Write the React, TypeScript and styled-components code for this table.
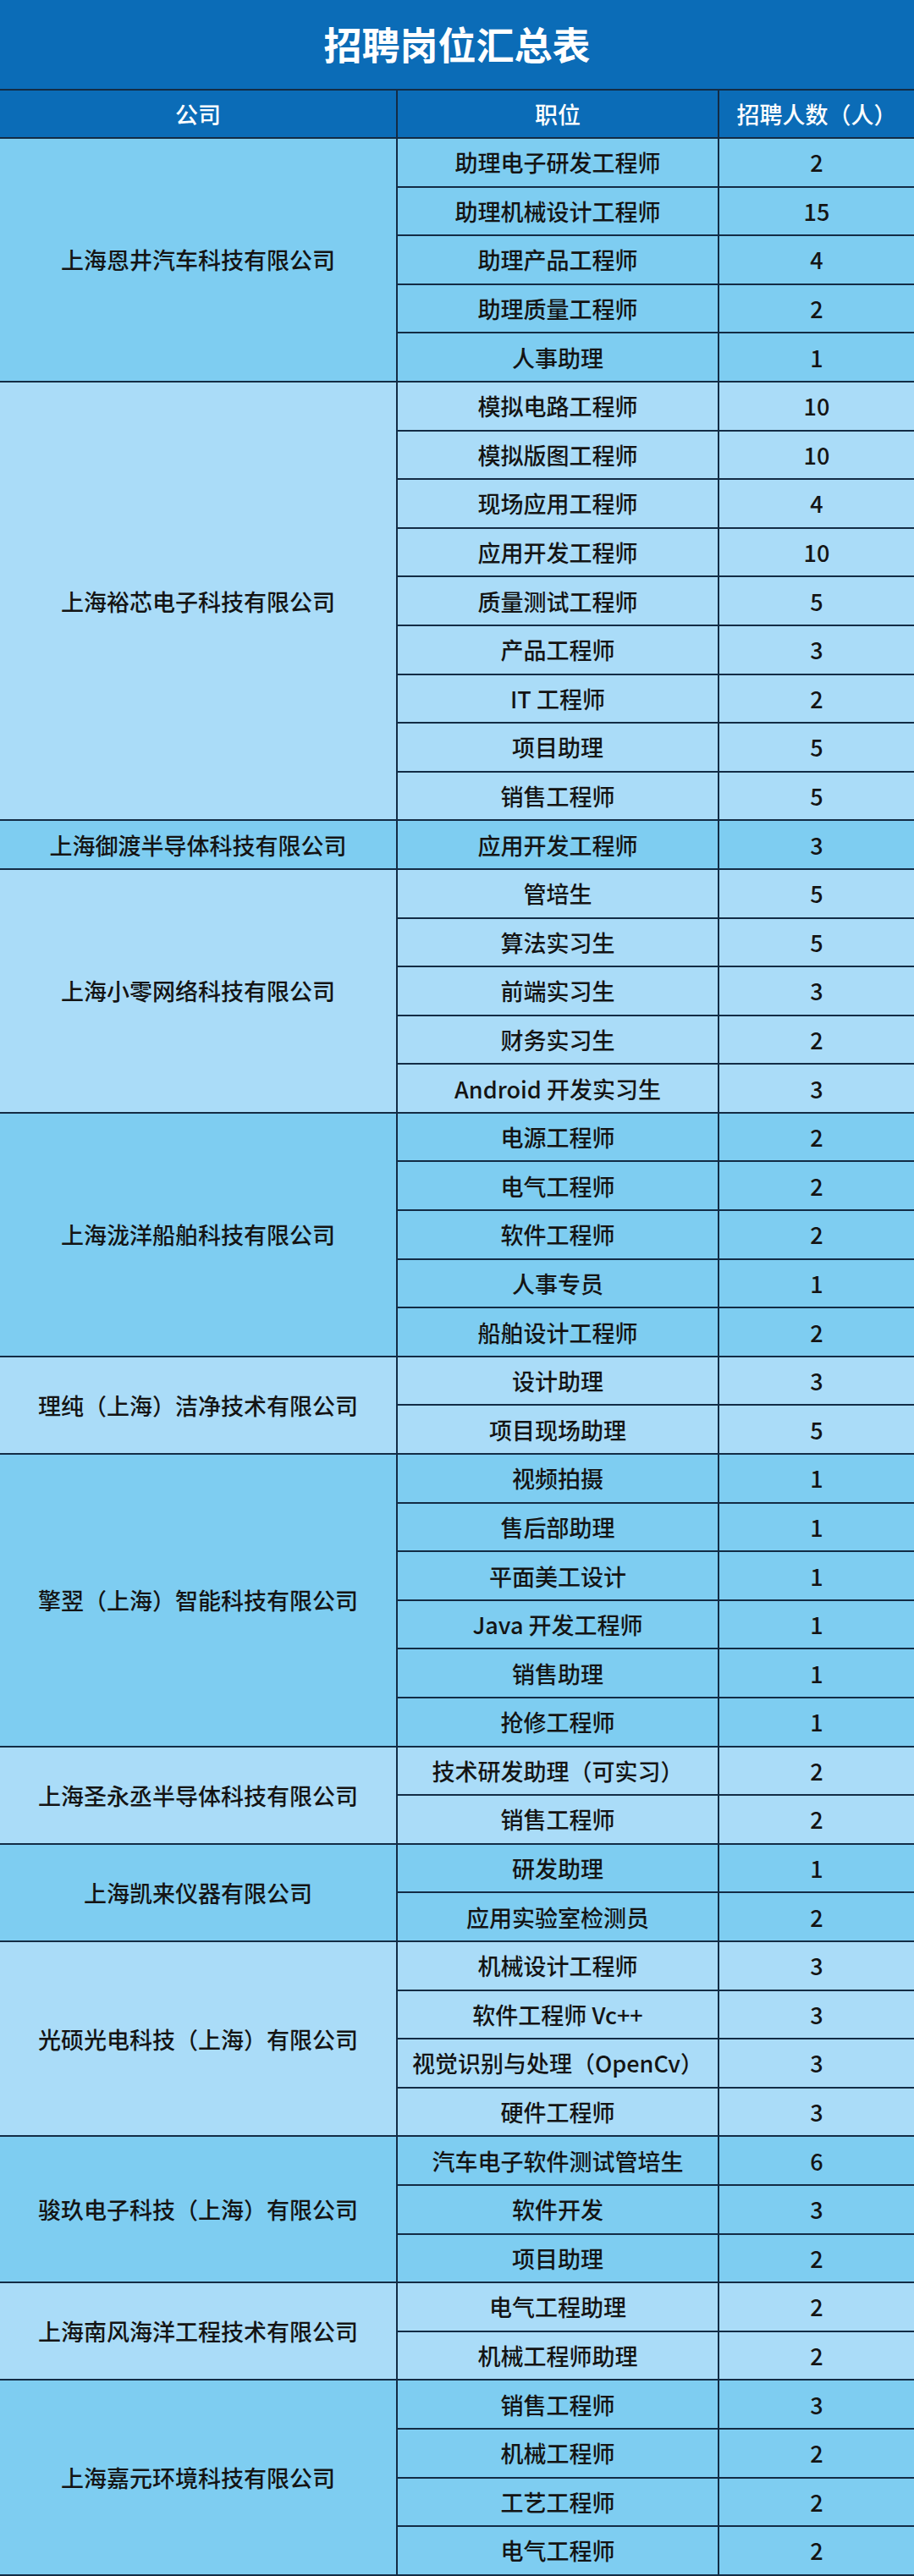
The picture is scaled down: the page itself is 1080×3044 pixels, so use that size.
import React from "react";
import styled, { createGlobalStyle } from "styled-components";

const Global = createGlobalStyle`
  html, body { margin: 0; padding: 0; background: #7ecdf1; }
  body { font-family: "Noto Sans CJK SC", "Noto Sans", sans-serif; }
`;

type Job = [string, number];
type Company = { name: string; jobs: Job[] };

const data: Company[] = [
  { name: "上海恩井汽车科技有限公司", jobs: [["助理电子研发工程师", 2], ["助理机械设计工程师", 15], ["助理产品工程师", 4], ["助理质量工程师", 2], ["人事助理", 1]] },
  { name: "上海裕芯电子科技有限公司", jobs: [["模拟电路工程师", 10], ["模拟版图工程师", 10], ["现场应用工程师", 4], ["应用开发工程师", 10], ["质量测试工程师", 5], ["产品工程师", 3], ["IT 工程师", 2], ["项目助理", 5], ["销售工程师", 5]] },
  { name: "上海御渡半导体科技有限公司", jobs: [["应用开发工程师", 3]] },
  { name: "上海小零网络科技有限公司", jobs: [["管培生", 5], ["算法实习生", 5], ["前端实习生", 3], ["财务实习生", 2], ["Android 开发实习生", 3]] },
  { name: "上海泷洋船舶科技有限公司", jobs: [["电源工程师", 2], ["电气工程师", 2], ["软件工程师", 2], ["人事专员", 1], ["船舶设计工程师", 2]] },
  { name: "理纯（上海）洁净技术有限公司", jobs: [["设计助理", 3], ["项目现场助理", 5]] },
  { name: "擎翌（上海）智能科技有限公司", jobs: [["视频拍摄", 1], ["售后部助理", 1], ["平面美工设计", 1], ["Java 开发工程师", 1], ["销售助理", 1], ["抢修工程师", 1]] },
  { name: "上海圣永丞半导体科技有限公司", jobs: [["技术研发助理（可实习）", 2], ["销售工程师", 2]] },
  { name: "上海凯来仪器有限公司", jobs: [["研发助理", 1], ["应用实验室检测员", 2]] },
  { name: "光硕光电科技（上海）有限公司", jobs: [["机械设计工程师", 3], ["软件工程师 Vc++", 3], ["视觉识别与处理（OpenCv）", 3], ["硬件工程师", 3]] },
  { name: "骏玖电子科技（上海）有限公司", jobs: [["汽车电子软件测试管培生", 6], ["软件开发", 3], ["项目助理", 2]] },
  { name: "上海南风海洋工程技术有限公司", jobs: [["电气工程助理", 2], ["机械工程师助理", 2]] },
  { name: "上海嘉元环境科技有限公司", jobs: [["销售工程师", 3], ["机械工程师", 2], ["工艺工程师", 2], ["电气工程师", 2]] },
];

const Page = styled.div`
  width: 1080px;
  height: 3044px;
  overflow: hidden;
  background: #7ecdf1;
`;

const TitleBar = styled.div`
  height: 105px;
  background: #0b6cb7;
  display: flex;
  align-items: center;
  justify-content: center;
  color: #ffffff;
  font-size: 45px;
  font-weight: 700;
  letter-spacing: 0px;
  padding-bottom: 2px;
  box-sizing: border-box;
`;

const Table = styled.table`
  width: 1080px;
  border-collapse: collapse;
  table-layout: fixed;
  border-top: 2px solid #132c45;
`;

const HeadCell = styled.th`
  height: 55px;
  padding: 0;
  background: #0b6cb7;
  color: #ffffff;
  font-size: 27px;
  font-weight: 500;
  text-align: center;
  border: 2px solid #132c45;
  border-top: none;
  &:first-child { border-left: none; }
  &:last-child { border-right: none; }
`;

const Row = styled.tr<{ $light: boolean }>`
  height: 57.6px;
  background: ${(p) => (p.$light ? "#aadcf8" : "#7ecdf1")};
`;

const Cell = styled.td`
  padding: 0;
  text-align: center;
  vertical-align: middle;
  color: #141414;
  font-size: 27px;
  font-weight: 500;
  border: 2px solid #132c45;
  white-space: nowrap;
  &:first-child { border-left: none; }
  &:last-child { border-right: none; }
`;

const CompanyCell = styled(Cell)`
  font-weight: 500;
`;

const NumCell = styled(Cell)`
  border-right: none;
`;

export default function App() {
  return (
    <Page>
      <Global />
      <TitleBar>招聘岗位汇总表</TitleBar>
      <Table>
        <colgroup>
          <col style={{ width: 469 }} />
          <col style={{ width: 380 }} />
          <col />
        </colgroup>
        <thead>
          <tr>
            <HeadCell>公司</HeadCell>
            <HeadCell>职位</HeadCell>
            <HeadCell>招聘人数（人）</HeadCell>
          </tr>
        </thead>
        <tbody>
          {data.map((c, ci) =>
            c.jobs.map((j, ji) => (
              <Row key={`${ci}-${ji}`} $light={ci % 2 === 1}>
                {ji === 0 && <CompanyCell rowSpan={c.jobs.length}>{c.name}</CompanyCell>}
                <Cell>{j[0]}</Cell>
                <NumCell>{j[1]}</NumCell>
              </Row>
            ))
          )}
        </tbody>
      </Table>
    </Page>
  );
}
